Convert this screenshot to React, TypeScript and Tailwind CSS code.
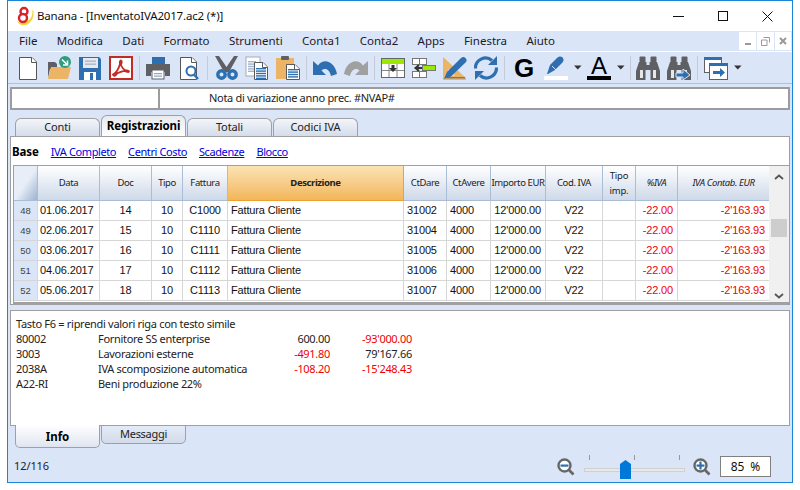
import React from "react";

const B = "#2d6fb0";
const G = "#5f6064";
const O = "#ecb566";
const Lime = "#9be800";

const Svg = ({ children, w = 24, h = 24, cls = "" }: { children: React.ReactNode; w?: number; h?: number; cls?: string }) => (
  <svg width={w} height={h} viewBox={`0 0 ${w} ${h}`} className={`block shrink-0 ${cls}`}>{children}</svg>
);

const Doc = ({ x, y, w, h, stroke = "#606060" }: { x: number; y: number; w: number; h: number; stroke?: string }) => (
  <g>
    <path d={`M${x + .5} ${y + .5}H${x + w - 5}L${x + w - .5} ${y + 5}V${y + h - .5}H${x + .5}Z`} fill="#fff" stroke={stroke} strokeWidth="1" />
    <path d={`M${x + w - 5.5} ${y + .5}V${y + 5.5}H${x + w - .5}`} fill="#fff" stroke={stroke} strokeWidth="1" />
  </g>
);
const Lines = ({ x, y, w, n, c = B }: { x: number; y: number; w: number; n: number; c?: string }) => (
  <g fill={c}>{Array.from({ length: n }).map((_, i) => <rect key={i} x={x} y={y + i * 2.4} width={w} height="1.4" />)}</g>
);
const Caret = ({ cls = "" }: { cls?: string }) => (
  <Svg w={8} h={24} cls={cls}><path d="M0 9.5H7.5L3.75 13.5Z" fill="#333" /></Svg>
);
const Sep = ({ cls }: { cls: string }) => <div className={`h-[24px] w-px shrink-0 bg-[#c4cbd6] ${cls}`} />;

const Binoc = () => (
  <g fill={G}>
    <rect x="3.5" y="0.5" width="6" height="6" rx="1" />
    <rect x="14.5" y="0.5" width="6" height="6" rx="1" />
    <path d="M3 6h7.5v3h3V6H21l3 9v9h-9.5V14h-5v10H0v-9Z" />
    <rect x="4" y="14" width="3" height="8" fill="#fff" opacity=".85" />
    <rect x="17" y="14" width="3" height="8" fill="#fff" opacity=".85" />
  </g>
);

const Toolbar = () => (
  <div className="flex h-[33px] shrink-0 items-center border-t border-b border-t-white border-b-[#b8c0cc] bg-[#dae5f8] pl-[8px] pt-[1px]">
    <Svg cls="ml-[0px]"><Doc x={3} y={1} w={18} h={23} stroke="#555" /></Svg>
    <Svg cls="ml-[7px]">
      <path d="M1 6h7l2 2v5H3L1 22Z" fill={G} />
      <path d="M1 23 4 11h20l-3 12Z" fill={O} />
      <circle cx="18" cy="6" r="6" fill="#2f9c7c" />
      <path d="M15 3.5 20 8.5M20.5 4.5V9H16" stroke="#fff" strokeWidth="1.6" fill="none" />
    </Svg>
    <Svg cls="ml-[7px]">
      <path d="M1 1h20l2 2v21H1Z" fill={B} />
      <rect x="5" y="2" width="15" height="10" fill="#e6e9ee" />
      <rect x="7" y="4.5" width="11" height="1.3" fill="#a9b4c2" />
      <rect x="7" y="7.5" width="11" height="1.3" fill="#a9b4c2" />
      <rect x="6" y="16" width="12" height="8" fill="#fff" />
      <rect x="12" y="17" width="3" height="7" fill={B} />
    </Svg>
    <Svg cls="ml-[7px]">
      <rect x="1" y="1" width="22" height="22" fill="#fff" stroke="#c22a24" strokeWidth="2" />
      <path d="M4 18.5c3-1.5 5.5-5 7-10.500-.5-2 0-3.500 1-3.500 1 .5.5 3-.2 4.500 1.200 2.800 3 4.500 4.800 5.500 1.500-.2 3.400 0 3.400 1 0 1-2.500.5-4-.6-2.500.4-5 1.200-7.500 2.200-2 3-3.500 3.500-4.500 1.400Z" fill="none" stroke="#c22a24" strokeWidth="1.800" />
    </Svg>
    <Sep cls="ml-[6px]" />
    <Svg cls="ml-[6px]">
      <rect x="6" y="1" width="13" height="7" fill={B} />
      <path d="M0 8h24v12h-5v-4H5v4H0Z" fill={G} />
      <rect x="6" y="14" width="12" height="9" fill="#fff" stroke={G} />
      <rect x="8" y="17" width="8" height="1.200" fill={B} opacity=".6" />
      <rect x="8" y="19.500" width="8" height="1.200" fill={B} opacity=".6" />
    </Svg>
    <Svg cls="ml-[8px]">
      <Doc x={2} y={1} w={17} h={23} stroke="#555" />
      <circle cx="13" cy="15" r="4.500" fill="#fff" stroke={B} strokeWidth="2" />
      <path d="M16 18.500 20 23" stroke={B} strokeWidth="2.500" />
    </Svg>
    <Sep cls="ml-[5px]" />
    <Svg cls="ml-[7px]">
      <path d="M4 0 11.500 11 19 0 23 0 14 16H9L0 0Z" fill={G} />
      <circle cx="6.500" cy="18.500" r="3.700" fill="none" stroke={B} strokeWidth="3.400" />
      <circle cx="17.500" cy="18.500" r="3.700" fill="none" stroke={B} strokeWidth="3.400" />
    </Svg>
    <Svg cls="ml-[6px]">
      <rect x="1" y="1" width="14" height="19" fill="#fff" stroke="#a6acb6" />
      <Lines x={3} y={5} w={8} n={5} c="#9fb4cf" />
      <Doc x={9} y={6} w={14} h={18} stroke="#5a5a5a" />
      <Lines x={11} y={12} w={10} n={5} />
    </Svg>
    <Svg cls="ml-[7px]">
      <rect x="0" y="2" width="18" height="21" fill={O} />
      <rect x="5" y="0" width="8" height="4" rx="1" fill={G} />
      <Doc x={10} y={8} w={14} h={16} stroke="#5a5a5a" />
      <Lines x={12} y={13} w={10} n={4} />
    </Svg>
    <Sep cls="ml-[6px]" />
    <Svg cls="ml-[6px]">
      <path d="M0 5v14h13l-4.500-4.500c3.500-3 8-1.500 9.500 5.500l6-2C22 6 11 1 5 9.500Z" fill={B} />
    </Svg>
    <Svg cls="ml-[7px]">
      <path d="M24 5v14H11l4.500-4.500c-3.500-3-8-1.500-9.500 5.500L0 18C2 6 13 1 19 9.500Z" fill="#a0a0a0" />
    </Svg>
    <Sep cls="ml-[6px]" />
    <Svg cls="ml-[6px]">
      <rect x=".5" y="2.500" width="23" height="19" fill="#fff" stroke="#666" />
      <rect x="1" y="3" width="22" height="5" fill={Lime} />
      <path d="M1 14.500H23M8 8V21M16 8V21" stroke="#888" />
      <path d="M10.500 9h3v3H16L12 16 8 12h2.500Z" fill="#333" />
    </Svg>
    <Svg cls="ml-[7px]">
      <rect x=".5" y="2.500" width="14" height="6" fill="#fff" stroke="#777" />
      <path d="M7.500 2.500V8.500" stroke="#777" />
      <rect x=".5" y="15.500" width="14" height="6" fill="#fff" stroke="#777" />
      <path d="M7.500 15.500V21.500" stroke="#777" />
      <rect x="10.500" y="9.500" width="13" height="5" fill={Lime} stroke="#777" />
      <path d="M4 12h6M7 9l-3.500 3L7 15" stroke="#333" strokeWidth="2" fill="none" />
    </Svg>
    <Svg cls="ml-[7px]">
      <path d="M0 1 23 22V24H0Z" fill={O} />
      <path d="M5 13 12 19.500H5Z" fill="#dae5f8" />
      <rect x="4" y="21" width="18" height="1.400" fill="#777" />
      <path d="M1 23 4 16 18 2c1.500-1.500 3-1.500 4.500 0s1.500 3 0 4.500L8 20.500Z" fill={B} />
    </Svg>
    <Svg cls="ml-[7px]">
      <path d="M1.500 12.500a10 10 0 0 1 16.500-8" fill="none" stroke={B} strokeWidth="3.200" />
      <path d="M22.500 11.500a10 10 0 0 1-16.500 8" fill="none" stroke={B} strokeWidth="3.200" />
      <path d="M14 9h9V0Z" fill={B} />
      <path d="M10 15H1v9Z" fill={B} />
    </Svg>
    <Sep cls="ml-[6px]" />
    <span className="ml-[9px] flex h-[24px] w-[22px] shrink-0 items-center font-['Liberation_Sans',sans-serif] text-[26px] font-bold leading-[24px] text-black">G</span>
    <div className="ml-[8px] flex h-[24px] w-[24px] shrink-0 flex-col items-center">
      <Svg w={24} h={19}>
        <path d="M3 18 6 9 13 2c2-2 4-2 5.500-.5S20 5 18 7L11 14 4 18Z" fill={B} />
        <path d="M8 10 12 14" stroke="#dae5f8" />
      </Svg>
      <div className="mt-[1px] h-[4px] w-[24px] bg-white" />
    </div>
    <Caret cls="ml-[6px]" />
    <div className="ml-[5px] flex h-[24px] w-[24px] shrink-0 flex-col items-center">
      <span className="h-[19px] font-['Liberation_Sans',sans-serif] text-[24px] leading-[20px] text-black">A</span>
      <div className="mt-[1px] h-[4px] w-[24px] bg-black" />
    </div>
    <Caret cls="ml-[6px]" />
    <Sep cls="ml-[5px]" />
    <Svg cls="ml-[5px]"><Binoc /></Svg>
    <Svg cls="ml-[7px]">
      <Binoc />
      <path d="M9 17h7v-4l7 6-7 5v-3H9Z" fill={B} stroke="#dae5f8" />
    </Svg>
    <Sep cls="ml-[6px]" />
    <Svg cls="ml-[6px]">
      <rect x=".5" y="1.500" width="17" height="15" fill="#fff" stroke={G} />
      <rect x="0" y="1" width="18" height="3" fill={B} />
      <rect x="5.500" y="7.500" width="18" height="16" fill="#fff" stroke={G} />
      <rect x="5" y="7" width="19" height="3" fill={B} />
      <path d="M9 15h7v-3l5 4.500-5 4.500v-3H9Z" fill={B} />
    </Svg>
    <Caret cls="ml-[6px]" />
  </div>
);

const cols = "grid grid-cols-[24px_62px_52px_31px_45px_176px_43px_44px_55px_57px_33px_42px_92px]";
const headers = ["", "Data", "Doc", "Tipo", "Fattura", "Descrizione", "CtDare", "CtAvere", "Importo EUR", "Cod. IVA", "", "%IVA", "IVA Contab. EUR"];
const rows = [
  ["48", "01.06.2017", "14", "C1000", "31002"],
  ["49", "02.06.2017", "15", "C1110", "31004"],
  ["50", "03.06.2017", "16", "C1111", "31005"],
  ["51", "04.06.2017", "17", "C1112", "31006"],
  ["52", "05.06.2017", "18", "C1113", "31007"],
];

const cell = "flex items-center border-r border-b border-[#d6d6d6] px-[3px]";

const Table = () => (
  <div className="ml-[2px] flex h-[139px] w-[777px] border border-[#a0a0a0] border-b-2">
    <div className="min-w-0 flex-1">
      <div className={`${cols} h-[35px]`}>
        {headers.map((h, i) => {
          if (i === 0) return <div key={i} className="border-r border-b border-[#a9bdd4] bg-gradient-to-br from-[#e8eef8] from-50% to-[#9db3d0]" />;
          if (i === 5) return <div key={i} className="flex items-center justify-center border-r border-b border-[#f0a030] bg-gradient-to-b from-[#fbe3b4] to-[#f2b658] text-[9.500px] font-bold tracking-[-0.4px] text-[#222]">{h}</div>;
          if (i === 10) return <div key={i} className="flex flex-col items-center justify-center border-r border-b border-[#a9bdd4] bg-gradient-to-b from-white to-[#cfd9e9] text-[9.500px] leading-[15px] tracking-[-0.2px] text-[#222]"><span>Tipo</span><span>imp.</span></div>;
          return <div key={i} className={`flex items-center justify-center whitespace-nowrap border-r border-b border-[#a9bdd4] bg-gradient-to-b from-white to-[#cfd9e9] text-[9.500px] tracking-[-0.4px] text-[#222] ${i >= 11 ? "italic" : ""}`}>{h}</div>;
        })}
      </div>
      {rows.map(r => (
        <div key={r[0]} className={`${cols} h-[20px] font-['Liberation_Sans',sans-serif] text-[11px] tracking-[-0.15px] text-[#111]`}>
          <div className="flex items-center justify-center border-r border-b border-[#d6d6d6] bg-[#dae5f8] pt-[2px] text-[9.500px] text-[#444]">{r[0]}</div>
          <div className={`${cell} pl-[2px]`}>{r[1]}</div>
          <div className={`${cell} justify-center`}>{r[2]}</div>
          <div className={`${cell} justify-center`}>10</div>
          <div className={`${cell} justify-center`}>{r[3]}</div>
          <div className={cell}>Fattura Cliente</div>
          <div className={cell}>{r[4]}</div>
          <div className={cell}>4000</div>
          <div className={`${cell} justify-end pr-[4px]`}>12'000.00</div>
          <div className={`${cell} justify-center`}>V22</div>
          <div className={cell} />
          <div className={`${cell} justify-end pr-[4px] text-[#f00000]`}>-22.00</div>
          <div className={`${cell} justify-end pr-[4px] text-[#f00000]`}>-2'163.93</div>
        </div>
      ))}
    </div>
    <div className="flex w-[20px] shrink-0 flex-col items-center bg-[#f0f0f0] pb-[3px] pt-[8px]">
      <Svg w={10} h={6}><path d="M1 5 5 1.500 9 5" fill="none" stroke="#555" strokeWidth="1.800" /></Svg>
      <div className="mt-[39px] h-[18px] w-[16px] bg-[#cdcdcd]" />
      <Svg w={10} h={6} cls="mt-auto"><path d="M1 1 5 4.500 9 1" fill="none" stroke="#555" strokeWidth="1.800" /></Svg>
    </div>
  </div>
);

const TabTop = ({ label, active, cls }: { label: string; active?: boolean; cls: string }) => (
  <div className={`flex w-[85px] shrink-0 items-center justify-center rounded-t-[6px] border border-b-0 border-[#a0a0a0] ${active ? "h-[21px] bg-gradient-to-b from-[#e8eaee] to-white text-[11.500px] font-bold tracking-[-0.1px] text-black" : "h-[18px] bg-gradient-to-b from-[#f3f5f9] to-[#d5dcea] text-[11px] tracking-[-0.1px] text-[#222]"} ${cls}`}>{label}</div>
);

const infoRows = [
  ["80002", "Fornitore SS enterprise", "600.00", "-93'000.00", false, true],
  ["3003", "Lavorazioni esterne", "-491.80", "79'167.66", true, false],
  ["2038A", "IVA scomposizione automatica", "-108.20", "-15'248.43", true, true],
  ["A22-RI", "Beni produzione 22%", "", "", false, false],
] as const;

const Lens = ({ plus }: { plus?: boolean }) => (
  <Svg w={18} h={18}>
    <circle cx="7.500" cy="7.500" r="6" fill="#fff" stroke="#666" strokeWidth="2.400" />
    <path d="M12 12 16.500 16.500" stroke="#666" strokeWidth="2.600" />
    <rect x="3.500" y="6.500" width="8" height="2.200" fill={B} />
    {plus && <rect x="6.400" y="3.500" width="2.200" height="8" fill={B} />}
  </Svg>
);

export default function App() {
  return (
    <div className="h-[490px] w-[800px] overflow-hidden bg-white font-['Noto_Sans',sans-serif] text-[12px]">
      <div className="ml-[7px] flex h-[483px] w-[786px] flex-col border border-[#1a86d9] bg-[#dae5f8]">
        {/* Title bar */}
        <div className="flex h-[30px] shrink-0 items-center bg-white pl-[8px]">
          <Svg w={18} h={20}>
            <path d="M1 15c3 3 9 2 13-2 2-3 3-6 2-9l1.500 1c1 6-2 11-6 13.500-4 1.500-9 .5-10.500-3.500Z" fill="#f5d33c" />
            <circle cx="8" cy="5.500" r="3.500" fill="#fff" stroke="#d92128" strokeWidth="2.400" />
            <circle cx="7" cy="12" r="4" fill="#fff" stroke="#d92128" strokeWidth="2.400" />
          </Svg>
          <span className="ml-[3px] text-[11.500px] tracking-[-0.18px] text-[#111]">Banana - [InventatoIVA2017.ac2 (*)]</span>
          <div className="ml-auto flex items-center pr-[19px]">
            <Svg w={11} h={11}><path d="M0 5.500H11" stroke="#111" /></Svg>
            <Svg w={10} h={10} cls="ml-[34px]"><rect x=".5" y=".5" width="9" height="9" fill="none" stroke="#111" /></Svg>
            <Svg w={11} h={11} cls="ml-[34px]"><path d="M.5.5 10.500 10.500M10.500.5.5 10.500" stroke="#111" /></Svg>
          </div>
        </div>
        {/* Menu */}
        <div className="flex h-[20px] shrink-0 items-center">
          <div className="flex h-[20px] w-[731px] items-center gap-[19.300px] pl-[11px] text-[11.500px] text-[#1a1a2a]">
            {["File", "Modifica", "Dati", "Formato", "Strumenti", "Conta1", "Conta2", "Apps", "Finestra", "Aiuto"].map(m => <span key={m}>{m}</span>)}
          </div>
          <div className="flex h-[18px] items-center gap-px">
            <div className="flex h-[18px] w-[17px] items-end justify-center bg-white pb-[5px]"><div className="h-[2px] w-[6px] bg-[#999]" /></div>
            <div className="flex h-[18px] w-[17px] items-center justify-center bg-white">
              <Svg w={9} h={9}><path d="M2.500.5h6v5M.5 3h5.500v5.500H.5Z" fill="none" stroke="#999" /></Svg>
            </div>
            <div className="flex h-[18px] w-[16px] items-center justify-center bg-white">
              <Svg w={8} h={8}><path d="M1 1 7 7M7 1 1 7" stroke="#999" strokeWidth="2" /></Svg>
            </div>
          </div>
        </div>
        <Toolbar />
        {/* Formula bar */}
        <div className="mx-[2px] mt-[3px] flex h-[23px] shrink-0 border-2 border-[#9c9c9c] bg-white">
          <div className="w-[148px] border-r-2 border-[#9c9c9c]" />
          <div className="flex items-center pl-[49px] text-[11px] tracking-[-0.3px] text-[#222]">Nota di variazione anno prec. #NVAP#</div>
        </div>
        {/* Tabs */}
        <div className="mt-[5px] flex h-[21px] shrink-0 items-end pl-[7px]">
          <TabTop label="Conti" cls="" />
          <TabTop label="Registrazioni" active cls="ml-px" />
          <TabTop label="Totali" cls="ml-px" />
          <TabTop label="Codici IVA" cls="ml-px" />
        </div>
        {/* Main panel */}
        <div className="mx-[2px] flex h-[169px] shrink-0 flex-col border border-[#a0a0a0] bg-white">
          <div className="flex h-[28px] items-center gap-[12px] pl-[1px] pt-[2px] text-[11px] tracking-[-0.4px]">
            <span className="text-[11.500px] font-bold tracking-[-0.1px] text-black">Base</span>
            {["IVA Completo", "Centri Costo", "Scadenze", "Blocco"].map(l => <span key={l} className="text-[#0000e0] underline">{l}</span>)}
          </div>
          <Table />
        </div>
        {/* Info panel */}
        <div className="mx-[2px] mt-[5px] flex h-[116px] shrink-0 flex-col border border-[#a0a0a0] bg-white pl-[5px] pt-[5px] text-[11px] leading-[15px] tracking-[-0.3px] text-[#222]">
          <div>Tasto F6 = riprendi valori riga con testo simile</div>
          {infoRows.map(r => (
            <div key={r[0]} className="flex">
              <span className="w-[82px]">{r[0]}</span>
              <span className="w-[180px]">{r[1]}</span>
              <span className={`w-[52px] text-right ${r[4] ? "text-[#f00000]" : ""}`}>{r[2]}</span>
              <span className={`w-[82px] text-right ${r[5] ? "text-[#f00000]" : ""}`}>{r[3]}</span>
            </div>
          ))}
        </div>
        {/* Bottom tabs */}
        <div className="flex h-[23px] shrink-0 items-start pl-[7px]">
          <div className="-mt-px flex h-[23px] w-[85px] items-center justify-center rounded-b-[5px] border border-t-0 border-[#a0a0a0] bg-gradient-to-b from-white to-[#dfe5f0] pt-[2px] text-[11.500px] font-bold text-black">Info</div>
          <div className="-mt-px ml-px flex h-[19px] w-[85px] items-center justify-center rounded-b-[5px] border border-[#a0a0a0] bg-gradient-to-b from-[#e4ebf8] to-[#d3dbe9] text-[11px] tracking-[-0.3px] text-[#222]">Messaggi</div>
        </div>
        {/* Status bar */}
        <div className="flex flex-1 items-center pl-[6px] pt-[2px] text-[11px] tracking-[-0.1px] text-[#222]">
          <span>12/116</span>
          <div className="ml-auto flex items-center pr-[21px]">
            <Lens />
            <div className="relative ml-[9px] h-[24px] w-[101px]">
              <div className="flex h-[6px] justify-between px-[5px]">
                <div className="h-[5px] w-px bg-[#999]" />
                <div className="h-[5px] w-px bg-[#999]" />
                <div className="h-[5px] w-px bg-[#999]" />
              </div>
              <div className="mt-[7px] h-[4px] w-[101px] border border-[#d0d0d0] bg-[#e8e8e8]" />
              <svg width="11" height="19" viewBox="0 0 11 19" className="absolute left-[36px] top-[5px]"><path d="M0 4 5.500 0 11 4V19H0Z" fill="#0078d7" /></svg>
            </div>
            <div className="ml-[8px]"><Lens plus /></div>
            <div className="ml-[9px] flex h-[21px] w-[51px] items-center justify-center whitespace-pre border border-[#808080] bg-white text-[12px] text-[#111]">85  %</div>
          </div>
        </div>
        
      </div>
    </div>
  );
}
